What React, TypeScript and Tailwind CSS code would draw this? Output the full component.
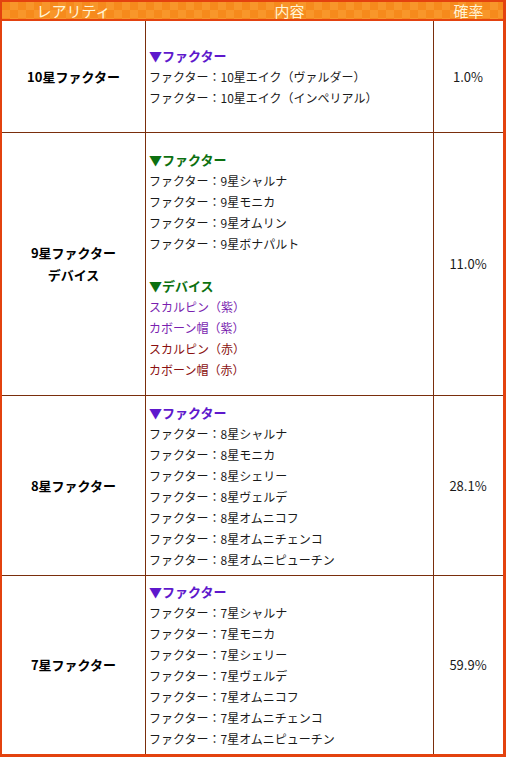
import React from "react";

type Line = { t: string; c?: string; b?: boolean };

const P = "text-[#5e18cc]";
const G = "text-[#0c7010]";

const rows: { name: string[]; h: string; rate: string; lines: Line[] }[] = [
  {
    name: ["10星ファクター"],
    h: "h-[111px]",
    rate: "1.0%",
    lines: [
      { t: "▼ファクター", c: P, b: true },
      { t: "ファクター：10星エイク（ヴァルダー）" },
      { t: "ファクター：10星エイク（インペリアル）" },
    ],
  },
  {
    name: ["9星ファクター", "デバイス"],
    h: "h-[262px]",
    rate: "11.0%",
    lines: [
      { t: "▼ファクター", c: G, b: true },
      { t: "ファクター：9星シャルナ" },
      { t: "ファクター：9星モニカ" },
      { t: "ファクター：9星オムリン" },
      { t: "ファクター：9星ボナパルト" },
      { t: "" },
      { t: "▼デバイス", c: G, b: true },
      { t: "スカルピン（紫）", c: "text-[#7a1fb0]" },
      { t: "カボーン帽（紫）", c: "text-[#7a1fb0]" },
      { t: "スカルピン（赤）", c: "text-[#8a1010]" },
      { t: "カボーン帽（赤）", c: "text-[#8a1010]" },
    ],
  },
  {
    name: ["8星ファクター"],
    h: "h-[179px]",
    rate: "28.1%",
    lines: [
      { t: "▼ファクター", c: P, b: true },
      { t: "ファクター：8星シャルナ" },
      { t: "ファクター：8星モニカ" },
      { t: "ファクター：8星シェリー" },
      { t: "ファクター：8星ヴェルデ" },
      { t: "ファクター：8星オムニコフ" },
      { t: "ファクター：8星オムニチェンコ" },
      { t: "ファクター：8星オムニピューチン" },
    ],
  },
  {
    name: ["7星ファクター"],
    h: "h-[178px]",
    rate: "59.9%",
    lines: [
      { t: "▼ファクター", c: P, b: true },
      { t: "ファクター：7星シャルナ" },
      { t: "ファクター：7星モニカ" },
      { t: "ファクター：7星シェリー" },
      { t: "ファクター：7星ヴェルデ" },
      { t: "ファクター：7星オムニコフ" },
      { t: "ファクター：7星オムニチェンコ" },
      { t: "ファクター：7星オムニピューチン" },
    ],
  },
];

export default function App() {
  return (
    <div
      className="w-[506px] h-[757px] bg-white border-[#e3420f] border-l-2 border-r-[3px] border-t-2 border-b-[3px] flex flex-col text-[#1a1a1a]"
      style={{ fontFamily: '"Noto Sans CJK JP", "Noto Sans", sans-serif' }}
    >
      <div className="h-[19px] flex border-b-2 border-[#e3420f] bg-[#f78d1c] bg-[conic-gradient(#f8962a_25%,#f68a1c_0_50%,#f8962a_0_75%,#f68a1c_0)] bg-[length:16px_16px] text-[#fff4d6] text-[15px] leading-[17px]">
        <div className="w-[143px] text-center">レアリティ</div>
        <div className="w-[289px] text-center">内容</div>
        <div className="w-[69px] text-center">確率</div>
      </div>
      {rows.map((r, i) => (
        <div
          key={i}
          className={`${r.h} flex ${i < rows.length - 1 ? "border-b border-[#7a2e0c]" : ""} box-content`}
        >
          <div className="w-[143px] flex flex-col items-center justify-center font-bold text-[13px] leading-[22px] text-black">
            {r.name.map((n) => (
              <div key={n}>{n}</div>
            ))}
          </div>
          <div className="w-[288px] border-l border-[#7a2e0c] flex flex-col justify-center pl-[3px] text-[12px] leading-[21px]">
            {r.lines.map((l, j) => (
              <div key={j} className={`h-[21px] whitespace-nowrap ${l.c ?? ""} ${l.b ? "font-bold text-[13px]" : ""}`}>
                {l.t}
              </div>
            ))}
          </div>
          <div className="w-[69px] border-l border-[#7a2e0c] flex items-center justify-center text-[13px]">
            {r.rate}
          </div>
        </div>
      ))}
    </div>
  );
}
